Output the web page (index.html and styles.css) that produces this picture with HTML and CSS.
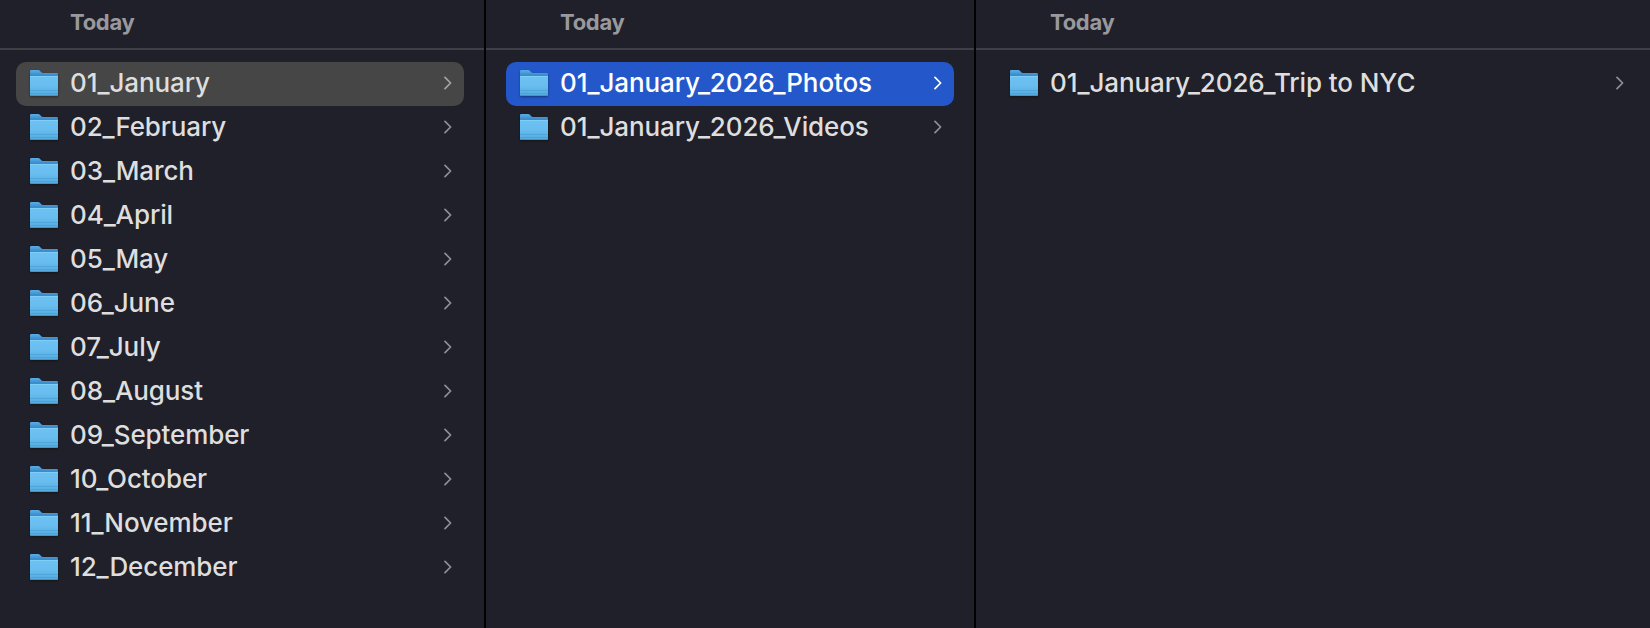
FILE: index.html
```
<!DOCTYPE html>
<html lang="en">

<head>
    <meta charset="UTF-8">
    <meta name="viewport" content="width=device-width, initial-scale=1.0">
    <title>Folders</title>
    <link rel="stylesheet" href="styles.css">
</head>

<body>
    <!-- shared icons -->
    <svg class="sprite" width="0" height="0">
        <defs>
            <linearGradient id="back" x1="0" y1="0" x2="0" y2="1">
                <stop offset="0" stop-color="#58b0e6" />
                <stop offset="0.25" stop-color="#3c8bcb" />
                <stop offset="1" stop-color="#3c8bcb" />
            </linearGradient>
            <linearGradient id="front" x1="0" y1="0" x2="0" y2="1">
                <stop offset="0" stop-color="#6cc3f3" />
                <stop offset="0.5" stop-color="#69bdee" />
                <stop offset="1" stop-color="#52a8de" />
            </linearGradient>
        </defs>
        <symbol id="folder" viewBox="0 0 28 28">
            <path d="M0 1.2Q0 0 1.2 0H8.2C10.6 0 10.6 3 13 3H26.8Q28 3 28 4.2V20H0Z" fill="url(#back)" />
            <path d="M0 6H28V24.8Q28 26 26.8 26H1.2Q0 26 0 24.8Z" fill="url(#front)" />
            <path d="M0 6.5H28" stroke="#8bd5fa" stroke-opacity=".6" />
            <path d="M0 20.5H28M0 23.5H28" stroke="#469cd4" stroke-opacity=".55" />
            <path d="M.5 25.5H27.5" stroke="#398fc9" stroke-opacity=".8" />
        </symbol>
        <symbol id="chevron" viewBox="0 0 8 14">
            <path d="M1 1.4L6.6 7L1 12.6" fill="none" stroke="currentColor" stroke-width="1.7" stroke-linecap="round" stroke-linejoin="round" />
        </symbol>
    </svg>

    <div class="browser">
        <section class="column first">
            <h2>Today</h2>
            <ul id="months"></ul>
        </section>
        <section class="column">
            <h2>Today</h2>
            <ul id="types"></ul>
        </section>
        <section class="column last">
            <h2>Today</h2>
            <ul id="trips"></ul>
        </section>
    </div>

    <script>
        function fillColumn(id, names, selectedClass) {
            const list = document.getElementById(id);
            names.forEach((name, i) => {
                const row = document.createElement("li");
                if (i === 0 && selectedClass) {
                    row.className = selectedClass;
                }
                row.innerHTML = '<svg class="folder"><use href="#folder"/></svg>' +
                    '<span class="name">' + name + '</span>' +
                    '<svg class="chevron"><use href="#chevron"/></svg>';
                list.appendChild(row);
            });
        }

        fillColumn("months", [
            "01_January", "02_February", "03_March", "04_April",
            "05_May", "06_June", "07_July", "08_August",
            "09_September", "10_October", "11_November", "12_December"
        ], "open");
        fillColumn("types", ["01_January_2026_Photos", "01_January_2026_Videos"], "active");
        fillColumn("trips", ["01_January_2026_Trip to NYC"]);
    </script>
</body>

</html>
```
FILE: styles.css
```
* {
    box-sizing: border-box;
}

body {
    margin: 0;
    background: #20202a;
    color: #dededf;
    font-family: Inter, "Liberation Sans", sans-serif;
    overflow: hidden;
}

.sprite {
    display: block;
}

.browser {
    display: flex;
    height: 628px;
}

.column {
    width: 490px;
    flex: none;
    border-left: 2px solid #000;
}

.column.first {
    width: 484px;
    border-left: none;
}

.column.last {
    width: auto;
    flex: 1;
}

h2 {
    height: 50px;
    margin: 0;
    padding-left: 74px;
    border-bottom: 2px solid #3f3f48;
    color: #99999d;
    font-size: 22px;
    font-weight: 700;
    line-height: 45px;
    letter-spacing: -0.3px;
}

.first h2 {
    padding-left: 70px;
}

ul {
    list-style: none;
    margin: 0;
    padding: 12px 20px 0;
}

.first ul {
    padding-left: 16px;
}

.last ul {
    padding-right: 14px;
}

li {
    display: flex;
    align-items: center;
    height: 44px;
    padding: 0 12px 0 14px;
    border-radius: 10px;
    color: #dededf;
}

.folder {
    width: 28px;
    height: 28px;
    flex: none;
    filter: drop-shadow(0 1px 1px rgba(0, 0, 0, 0.4));
}

.name {
    flex: 1;
    margin-left: 12px;
    padding-bottom: 2px;
    font-size: 26px;
    font-weight: 500;
    line-height: 42px;
    letter-spacing: -0.1px;
    white-space: nowrap;
}

.chevron {
    width: 8px;
    height: 14px;
    margin-top: -2px;
    color: #8f8f95;
}

.open {
    background: #464646;
}

.open .chevron {
    color: #a4a4a4;
}

.active {
    background: #2458ca;
    color: #fff;
}

.active .chevron {
    color: #fff;
}
```
